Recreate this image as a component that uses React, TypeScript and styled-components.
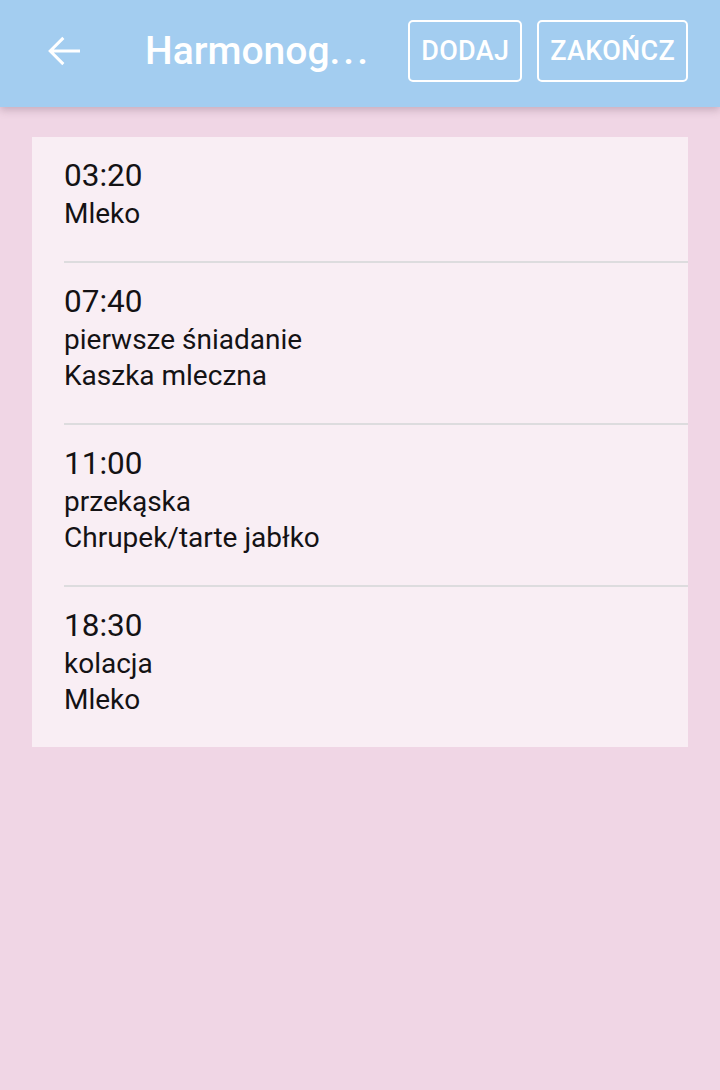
import React from "react";
import styled, { createGlobalStyle } from "styled-components";

const GlobalStyle = createGlobalStyle`
  html, body {
    margin: 0;
    padding: 0;
    background: #f0d6e5;
    font-family: Roboto, "Noto Sans", "Liberation Sans", sans-serif;
  }
  * { box-sizing: border-box; }
`;

const Page = styled.div`
  min-height: 1090px;
  background: #f0d6e5;
  display: flex;
  flex-direction: column;
`;

const Toolbar = styled.header`
  position: relative;
  z-index: 1;
  height: 107px;
  background: #a3cdf0;
  display: flex;
  align-items: center;
  padding: 0 32px 6px 40px;
  box-shadow: 0 3px 8px rgba(90, 60, 80, 0.28);
`;

const IconButton = styled.button`
  width: 48px;
  height: 48px;
  padding: 0;
  border: none;
  background: transparent;
  display: flex;
  align-items: center;
  justify-content: center;
  flex: 0 0 auto;
`;

const Title = styled.h1`
  margin: 0 0 0 57px;
  flex: 0 0 auto;
  font-size: 39px;
  font-weight: 500;
  color: #ffffff;
  white-space: nowrap;
`;

const Dots = styled.span`
  letter-spacing: 3px;
`;

const Actions = styled.div`
  margin-left: auto;
  display: flex;
  gap: 15px;
`;

const OutlineButton = styled.button`
  height: 62px;
  padding: 0 11px;
  border: 2px solid #ffffff;
  border-radius: 5px;
  background: transparent;
  color: #ffffff;
  font-family: Roboto, "Noto Sans", sans-serif;
  font-size: 27px;
  font-weight: 500;
  letter-spacing: 0.3px;
  text-transform: uppercase;
`;

const Content = styled.main`
  padding: 30px 32px;
`;

const Card = styled.ul`
  list-style: none;
  margin: 0;
  padding: 0;
  background: #f9eef4;
`;

const Row = styled.li`
  padding: 0 0 0 32px;
`;

const RowInner = styled.div<{ $last: boolean }>`
  padding: 19px 0 29px;
  border-bottom: ${(p) => (p.$last ? "none" : "2px solid #dddcde")};
  color: #141214;
`;

const Time = styled.div`
  font-size: 31.5px;
  line-height: 40px;
`;

const Line = styled.div`
  font-size: 28px;
  line-height: 36px;
`;

const ArrowBack = () => (
  <svg width="48" height="48" viewBox="0 0 24 24" fill="#ffffff">
    <path d="M20 11.25H6.9l5.3-5.3L11.15 4.9 4.05 12l7.1 7.1 1.05-1.05-5.3-5.3H20z" />
  </svg>
);

const items = [
  { time: "03:20", lines: ["Mleko"] },
  { time: "07:40", lines: ["pierwsze śniadanie", "Kaszka mleczna"] },
  { time: "11:00", lines: ["przekąska", "Chrupek/tarte jabłko"] },
  { time: "18:30", lines: ["kolacja", "Mleko"] },
];

export default function App() {
  return (
    <Page>
      <GlobalStyle />
      <Toolbar>
        <IconButton aria-label="Wstecz">
          <ArrowBack />
        </IconButton>
        <Title>
          Harmonog<Dots>...</Dots>
        </Title>
        <Actions>
          <OutlineButton>Dodaj</OutlineButton>
          <OutlineButton>Zakończ</OutlineButton>
        </Actions>
      </Toolbar>
      <Content>
        <Card>
          {items.map((it, i) => (
            <Row key={i}>
              <RowInner $last={i === items.length - 1}>
                <Time>{it.time}</Time>
                {it.lines.map((l, j) => (
                  <Line key={j}>{l}</Line>
                ))}
              </RowInner>
            </Row>
          ))}
        </Card>
      </Content>
    </Page>
  );
}
